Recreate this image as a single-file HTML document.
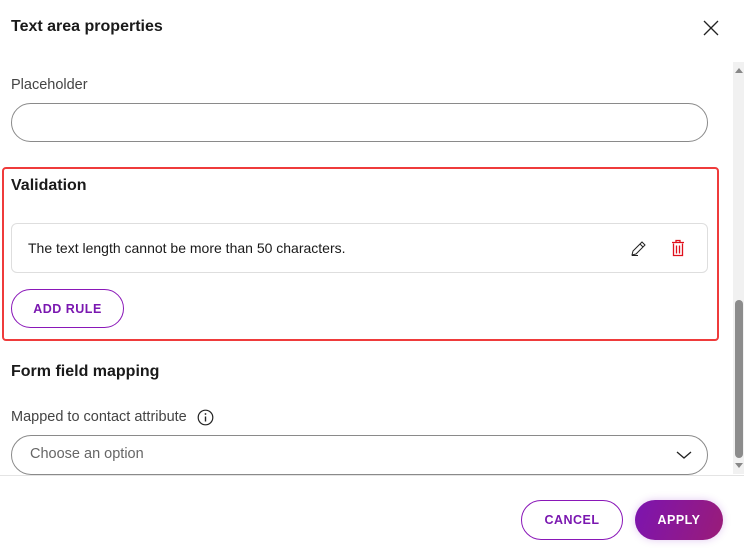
<!DOCTYPE html>
<html><head><style>
*{box-sizing:border-box;margin:0;padding:0}
body{width:744px;height:548px;overflow:hidden;background:#fff;font-family:"Liberation Sans",sans-serif;color:#1a1a1a;position:relative}
.a{position:absolute}
.h{font-weight:bold;font-size:16px}
.lbl{font-size:14.5px;color:#444}
.inp{border:1px solid #8a8a8a;border-radius:20px;background:#fff}
.btn{border-radius:20px;font-weight:bold;font-size:12.5px;letter-spacing:.5px;display:flex;align-items:center;justify-content:center}
</style></head><body>
<div class="a h" style="left:11px;top:18px">Text area properties</div>
<svg class="a" style="left:703px;top:20px" width="16" height="16"><path d="M1 1L15 15M15 1L1 15" stroke="#222" stroke-width="1.3"/></svg>
<div class="a" style="left:733px;top:62px;width:11px;height:412px;background:#f1f1f1"></div>
<svg class="a" style="left:734px;top:66px" width="10" height="8"><path d="M1 7L5 2L9 7Z" fill="#888"/></svg>
<div class="a" style="left:735px;top:300px;width:8px;height:158px;background:#8c8c8c;border-radius:4px"></div>
<svg class="a" style="left:734px;top:462px" width="10" height="8"><path d="M1 1L5 6L9 1Z" fill="#888"/></svg>
<div class="a lbl" style="left:11px;top:77px">Placeholder</div>
<div class="a inp" style="left:11px;top:103px;width:697px;height:39px"></div>
<div class="a" style="left:2px;top:167px;width:717px;height:174px;border:2px solid #ef3b3b;border-radius:4px"></div>
<div class="a h" style="left:11px;top:177px">Validation</div>
<div class="a" style="left:11px;top:223px;width:697px;height:50px;border:1px solid #dedede;border-radius:6px"></div>
<div class="a" style="left:28px;top:240px;font-size:14px">The text length cannot be more than 50 characters.</div>
<svg class="a" style="left:630px;top:240px" width="17" height="17"><path d="M2 15L3 11L12 2L15 5L6 14Z M10 4L13 7 M2 15.5H8" stroke="#222" stroke-width="1" fill="none"/></svg>
<svg class="a" style="left:670px;top:239px" width="16" height="18"><path d="M2 3.5H14 M6 3V1.5H10V3 M3.5 4.5V16.5H12.5V4.5 M6.5 6.5V14.5 M9.5 6.5V14.5" stroke="#e0101c" stroke-width="1.3" fill="none"/></svg>
<div class="a btn" style="left:11px;top:289px;width:113px;height:39px;border:1px solid #8a17b8;color:#7a17b0">ADD RULE</div>
<div class="a h" style="left:11px;top:363px">Form field mapping</div>
<div class="a lbl" style="left:11px;top:409px">Mapped to contact attribute</div>
<svg class="a" style="left:197px;top:409px" width="17" height="17"><circle cx="8.5" cy="8.5" r="7.3" stroke="#222" stroke-width="1.2" fill="none"/><path d="M8.5 7.5V12.5" stroke="#222" stroke-width="1.4"/><circle cx="8.5" cy="5" r="0.9" fill="#222"/></svg>
<div class="a inp" style="left:11px;top:435px;width:697px;height:40px"></div>
<div class="a" style="left:30px;top:446px;font-size:14.5px;color:#666">Choose an option</div>
<svg class="a" style="left:676px;top:450px" width="16" height="10"><path d="M1 2L8 8L15 2" stroke="#222" stroke-width="1.3" fill="none"/></svg>
<div class="a" style="left:0;top:475px;width:744px;height:1px;background:#e4e4e4"></div>
<div class="a btn" style="left:521px;top:500px;width:102px;height:40px;border:1px solid #8a17b8;color:#7a17b0">CANCEL</div>
<div class="a btn" style="left:635px;top:500px;width:88px;height:40px;background:linear-gradient(110deg,#7c14b0,#9a1c78);color:#fff;box-shadow:0 0 8px rgba(140,40,200,.25)">APPLY</div>
</body></html>
